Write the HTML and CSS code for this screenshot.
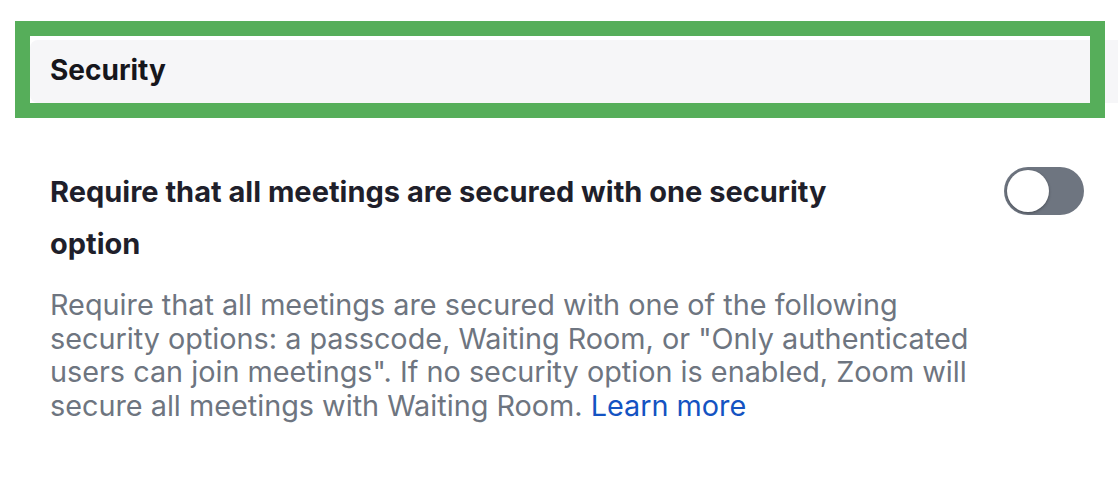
FILE: index.html
```html
<!DOCTYPE html>
<html>
<head>
<meta charset="utf-8">
<link rel="stylesheet" href="styles.css">
</head>
<body>
  <div class="page">
    <div class="section-head">
      <h2 class="section-title">Security</h2>
      <div class="highlight"></div>
    </div>
    <div class="setting">
      <div class="setting-text">
        <div class="setting-title">Require that all meetings are secured with one security option</div>
        <p class="setting-desc">Require that all meetings are secured with one of the following security options: a passcode, Waiting Room, or "Only authenticated users can join meetings". If no security option is enabled, Zoom will secure all meetings with Waiting Room. <a class="link" href="#">Learn more</a></p>
      </div>
      <div class="toggle"><span class="knob"></span></div>
    </div>
  </div>
</body>
</html>
```

FILE: styles.css
```css
html, body {
  margin: 0;
  padding: 0;
  background: #ffffff;
  font-family: Inter, "Noto Sans", sans-serif;
}
.page {
  width: 1118px;
  height: 496px;
  overflow: hidden;
  padding-top: 40px;
  box-sizing: border-box;
}
.section-head {
  position: relative;
  margin-left: 30px;
  height: 63px;
  background: #f6f6f8;
  border-radius: 8px 0 0 8px;
  display: flex;
  align-items: center;
  padding-left: 20px;
  padding-bottom: 3px;
  box-sizing: border-box;
}
.section-title {
  margin: 0;
  font-size: 28px;
  font-weight: 700;
  color: #16161c;
}
.highlight {
  position: absolute;
  left: -15px;
  top: -19px;
  width: 1060px;
  height: 67px;
  border: 15px solid #56ae5a;
  pointer-events: none;
}
.setting {
  display: flex;
  justify-content: space-between;
  align-items: flex-start;
  padding: 63px 34px 0 50px;
}
.setting-text {
  flex: 1;
  min-width: 0;
}
.setting-title {
  max-width: 830px;
  font-size: 29px;
  font-weight: 700;
  line-height: 52px;
  color: #1f1f2b;
}
.setting-desc {
  max-width: 930px;
  margin: 18px 0 0;
  font-size: 28.8px;
  line-height: 33.7px;
  color: #6e7580;
}
.link {
  display: inline-block;
  line-height: 33.7px;
  color: #1453c2;
  text-decoration: none;
}
.toggle {
  position: relative;
  flex: none;
  width: 80px;
  height: 48px;
  margin-top: 1px;
  border-radius: 24px;
  background: #6e7580;
}
.knob {
  position: absolute;
  left: 3px;
  top: 3px;
  width: 42px;
  height: 42px;
  border-radius: 50%;
  background: #ffffff;
  box-shadow: 0 1px 3px rgba(0,0,0,0.35);
}
```
